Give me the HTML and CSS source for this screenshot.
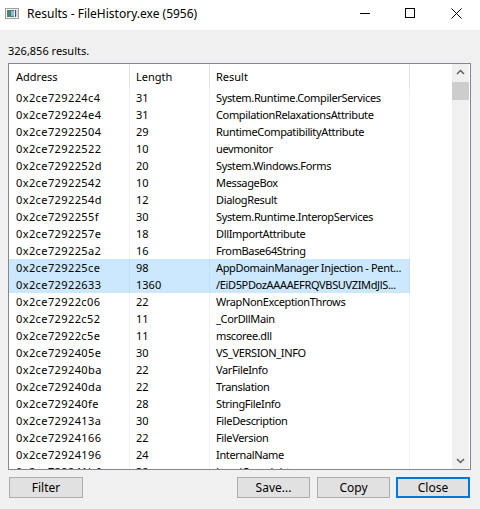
FILE: index.html
```html
<!DOCTYPE html>
<html>
<head>
<meta charset="utf-8">
<link rel="stylesheet" href="styles.css">
</head>
<body>
<div class="window">
  <div class="titlebar">
    <svg class="app-icon" width="14" height="11" viewBox="0 0 14 11">
      <rect x="0.5" y="0.5" width="13" height="10" fill="#f4f4f4" stroke="#a0a0a0"/>
      <rect x="2" y="2" width="7" height="7" fill="#3f7f9c"/>
      <rect x="2" y="2" width="3" height="7" fill="#4a8a5a"/>
      <rect x="6" y="3" width="3" height="5" fill="#8fb9d8"/>
      <rect x="10" y="2" width="1" height="7" fill="#505050"/>
      <rect x="11" y="2" width="2" height="7" fill="#d8d8d8"/>
    </svg>
    <div class="title">Results - FileHistory.exe (5956)</div>
    <div class="controls">
      <svg class="ctl" width="46" height="30" viewBox="0 0 46 30"><rect x="18" y="13" width="10" height="1" fill="#000"/></svg>
      <svg class="ctl" width="46" height="30" viewBox="0 0 46 30"><rect x="17.5" y="8.5" width="9" height="9" fill="none" stroke="#000"/></svg>
      <svg class="ctl" width="46" height="30" viewBox="0 0 46 30"><path d="M17.5 8.5 L27.5 18.5 M27.5 8.5 L17.5 18.5" stroke="#000" stroke-width="1" fill="none"/></svg>
    </div>
  </div>

  <div class="status">326,856 results.</div>

  <div class="listbox">
    <div class="table">
      <div class="row header">
        <div class="cell c1">Address</div>
        <div class="cell c2">Length</div>
        <div class="cell c3">Result</div>
        <div class="cell c4"></div>
      </div>
      <div class="row"><div class="cell c1">0x2ce729224c4</div><div class="cell c2">31</div><div class="cell c3">System.Runtime.CompilerServices</div><div class="cell c4"></div></div>
      <div class="row"><div class="cell c1">0x2ce729224e4</div><div class="cell c2">31</div><div class="cell c3">CompilationRelaxationsAttribute</div><div class="cell c4"></div></div>
      <div class="row"><div class="cell c1">0x2ce72922504</div><div class="cell c2">29</div><div class="cell c3">RuntimeCompatibilityAttribute</div><div class="cell c4"></div></div>
      <div class="row"><div class="cell c1">0x2ce72922522</div><div class="cell c2">10</div><div class="cell c3">uevmonitor</div><div class="cell c4"></div></div>
      <div class="row"><div class="cell c1">0x2ce7292252d</div><div class="cell c2">20</div><div class="cell c3">System.Windows.Forms</div><div class="cell c4"></div></div>
      <div class="row"><div class="cell c1">0x2ce72922542</div><div class="cell c2">10</div><div class="cell c3">MessageBox</div><div class="cell c4"></div></div>
      <div class="row"><div class="cell c1">0x2ce7292254d</div><div class="cell c2">12</div><div class="cell c3">DialogResult</div><div class="cell c4"></div></div>
      <div class="row"><div class="cell c1">0x2ce7292255f</div><div class="cell c2">30</div><div class="cell c3">System.Runtime.InteropServices</div><div class="cell c4"></div></div>
      <div class="row"><div class="cell c1">0x2ce7292257e</div><div class="cell c2">18</div><div class="cell c3">DllImportAttribute</div><div class="cell c4"></div></div>
      <div class="row"><div class="cell c1">0x2ce729225a2</div><div class="cell c2">16</div><div class="cell c3">FromBase64String</div><div class="cell c4"></div></div>
      <div class="row selected"><div class="cell c1">0x2ce729225ce</div><div class="cell c2">98</div><div class="cell c3">AppDomainManager Injection - Pent...</div><div class="cell c4"></div></div>
      <div class="row selected"><div class="cell c1">0x2ce72922633</div><div class="cell c2">1360</div><div class="cell c3">/EiD5PDozAAAAEFRQVBSUVZIMdJlS...</div><div class="cell c4"></div></div>
      <div class="row"><div class="cell c1">0x2ce72922c06</div><div class="cell c2">22</div><div class="cell c3">WrapNonExceptionThrows</div><div class="cell c4"></div></div>
      <div class="row"><div class="cell c1">0x2ce72922c52</div><div class="cell c2">11</div><div class="cell c3">_CorDllMain</div><div class="cell c4"></div></div>
      <div class="row"><div class="cell c1">0x2ce72922c5e</div><div class="cell c2">11</div><div class="cell c3">mscoree.dll</div><div class="cell c4"></div></div>
      <div class="row"><div class="cell c1">0x2ce7292405e</div><div class="cell c2">30</div><div class="cell c3">VS_VERSION_INFO</div><div class="cell c4"></div></div>
      <div class="row"><div class="cell c1">0x2ce729240ba</div><div class="cell c2">22</div><div class="cell c3">VarFileInfo</div><div class="cell c4"></div></div>
      <div class="row"><div class="cell c1">0x2ce729240da</div><div class="cell c2">22</div><div class="cell c3">Translation</div><div class="cell c4"></div></div>
      <div class="row"><div class="cell c1">0x2ce729240fe</div><div class="cell c2">28</div><div class="cell c3">StringFileInfo</div><div class="cell c4"></div></div>
      <div class="row"><div class="cell c1">0x2ce7292413a</div><div class="cell c2">30</div><div class="cell c3">FileDescription</div><div class="cell c4"></div></div>
      <div class="row"><div class="cell c1">0x2ce72924166</div><div class="cell c2">22</div><div class="cell c3">FileVersion</div><div class="cell c4"></div></div>
      <div class="row"><div class="cell c1">0x2ce72924196</div><div class="cell c2">24</div><div class="cell c3">InternalName</div><div class="cell c4"></div></div>
      <div class="row"><div class="cell c1">0x2ce729241b6</div><div class="cell c2">32</div><div class="cell c3">LegalCopyright</div><div class="cell c4"></div></div>
    </div>
    <div class="scrollbar">
      <div class="arrow">
        <svg width="17" height="17" viewBox="0 0 17 17"><path d="M5 10 L8.5 6.5 L12 10" fill="none" stroke="#606060" stroke-width="1.5"/></svg>
      </div>
      <div class="thumb"></div>
      <div class="track"></div>
      <div class="arrow">
        <svg width="17" height="17" viewBox="0 0 17 17"><path d="M5 7 L8.5 10.5 L12 7" fill="none" stroke="#606060" stroke-width="1.5"/></svg>
      </div>
    </div>
  </div>

  <div class="buttons">
    <button class="btn btn-filter">Filter</button>
    <button class="btn btn-save">Save...</button>
    <button class="btn btn-copy">Copy</button>
    <button class="btn btn-close">Close</button>
  </div>
</div>
</body>
</html>
```

FILE: styles.css
```css
* { box-sizing: border-box; }
html, body { margin: 0; padding: 0; }
body {
  font-family: "Noto Sans", "Open Sans", sans-serif;
  font-size: 11px;
  color: #000;
  background: #f0f0f0;
}
.window {
  width: 480px;
  height: 509px;
  background: #f0f0f0;
  overflow: hidden;
}
.titlebar {
  height: 30px;
  background: #fff;
  display: flex;
  align-items: flex-start;
}
.app-icon {
  margin: 8px 0 0 5px;
  flex: none;
}
.title {
  font-size: 12px;
  line-height: 16px;
  margin: 6px 0 0 8px;
  flex: 1;
}
.controls {
  display: flex;
}
.ctl { display: block; }

.status {
  padding: 0 8px;
  margin-top: 13px;
  line-height: 16px;
  height: 16px;
  margin-bottom: 4px;
}

.listbox {
  margin-left: 8px;
  width: 463px;
  height: 407px;
  border: 1px solid #828790;
  background: #fff;
  display: flex;
}
.table {
  flex: 1;
  overflow: hidden;
}
.row {
  display: grid;
  grid-template-columns: 121px 80px 200px 1fr;
  height: 17px;
  line-height: 17px;
}
.row.header {
  height: 25px;
  line-height: 25px;
}
.cell {
  white-space: nowrap;
  overflow: hidden;
  border-right: 1px solid #f0f0f0;
  padding-left: 6px;
}
.cell.c1 { padding-left: 7px; letter-spacing: 0.4px; }
.cell.c3 { letter-spacing: -0.35px; }
.header .cell.c1, .header .cell.c3 { letter-spacing: 0; }
.cell.c4 { border-right: none; }
.header .cell { border-right-color: #e5e5e5; }
.header .cell.c4 { border-right: none; }
.row.selected .c1,
.row.selected .c2,
.row.selected .c3 {
  background: #cce8ff;
  border-right-color: #c4dff5;
}

.scrollbar {
  width: 17px;
  flex: none;
  background: #f0f0f0;
  display: flex;
  flex-direction: column;
  margin-right: 1px;
}
.arrow { height: 17px; }
.arrow svg { display: block; }
.thumb {
  height: 18px;
  background: #cdcdcd;
  margin-top: 1px;
}
.track { flex: 1; }

.buttons {
  display: flex;
  margin-top: 7px;
  padding-left: 9px;
}
.btn {
  font-family: "Noto Sans", "Open Sans", sans-serif;
  font-size: 12px;
  height: 21px;
  width: 73px;
  background: #e1e1e1;
  border: 1px solid #adadad;
  padding: 0;
  line-height: 18px;
  color: #000;
}
.btn-filter { width: 74px; }
.btn-save { margin-left: auto; }
.btn-copy { margin-left: 7px; }
.btn-close {
  margin-left: 6px;
  width: 74px;
  margin-right: 10px;
  border: 2px solid #0078d7;
}
```
